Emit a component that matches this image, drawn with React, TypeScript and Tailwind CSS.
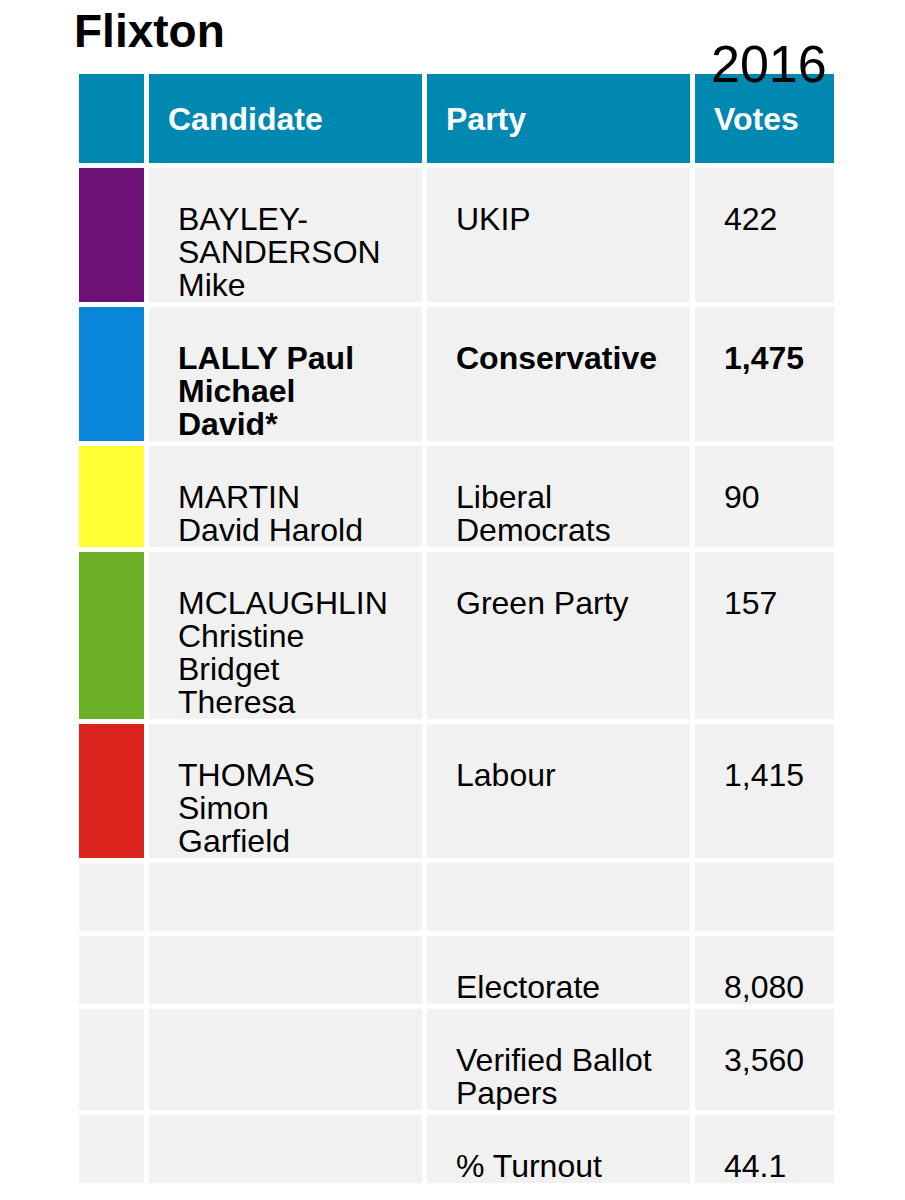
import React from 'react';

type Row = {
  color?: string;
  name: string[];
  party: string[];
  votes: string;
  bold?: boolean;
};

const rows: Row[] = [
  { color: 'bg-[#6d1176]', name: ['BAYLEY-', 'SANDERSON', 'Mike'], party: ['UKIP'], votes: '422' },
  { color: 'bg-[#0a86d9]', name: ['LALLY Paul', 'Michael', 'David*'], party: ['Conservative'], votes: '1,475', bold: true },
  { color: 'bg-[#ffff33]', name: ['MARTIN', 'David Harold'], party: ['Liberal', 'Democrats'], votes: '90' },
  { color: 'bg-[#6bb027]', name: ['MCLAUGHLIN', 'Christine', 'Bridget', 'Theresa'], party: ['Green Party'], votes: '157' },
  { color: 'bg-[#dc241f]', name: ['THOMAS', 'Simon', 'Garfield'], party: ['Labour'], votes: '1,415' },
  { name: ['\u00a0'], party: ['\u00a0'], votes: '\u00a0' },
  { name: ['\u00a0'], party: ['Electorate'], votes: '8,080' },
  { name: ['\u00a0'], party: ['Verified Ballot', 'Papers'], votes: '3,560' },
  { name: ['\u00a0'], party: ['% Turnout'], votes: '44.1' },
];

const Lines = ({ lines }: { lines: string[] }) => (
  <>
    {lines.map((l, i) => (
      <div key={i} className="whitespace-nowrap">{l}</div>
    ))}
  </>
);

const cell = 'bg-[#f1f1f1] pt-[35px] pl-[29px] text-[32px] leading-[33px] overflow-hidden';
const head = 'bg-[#0088b1] h-[89px] flex items-center pl-[19px] text-white font-bold text-[32px]';

export default function App() {
  return (
    <div className="relative w-[905px] h-[1200px] bg-white text-black font-['Liberation_Sans',Arial,sans-serif]">
      <h1 className="pt-[8px] pl-[74px] text-[46px] leading-[46px] font-bold">Flixton</h1>

      <div className="mt-[20px] ml-[79px] grid grid-cols-[65px_273px_263px_139px] gap-[5px]">
        <div className="bg-[#0088b1] h-[89px]" />
        <div className={head}>Candidate</div>
        <div className={head}>Party</div>
        <div className={head}>Votes</div>

        {rows.map((r, i) => (
          <React.Fragment key={i}>
            <div className={r.color ?? 'bg-[#f1f1f1]'} />
            <div className={`${cell} ${r.bold ? 'font-bold' : ''}`}>
              <Lines lines={r.name} />
            </div>
            <div className={`${cell} ${r.bold ? 'font-bold' : ''}`}>
              <Lines lines={r.party} />
            </div>
            <div className={`${cell} pl-[28px] ${r.bold ? 'font-bold' : ''}`}>
              <Lines lines={[r.votes]} />
            </div>
          </React.Fragment>
        ))}
      </div>

      <div className="absolute top-[38px] left-[711px] text-[52px] leading-[52px]">2016</div>
    </div>
  );
}
